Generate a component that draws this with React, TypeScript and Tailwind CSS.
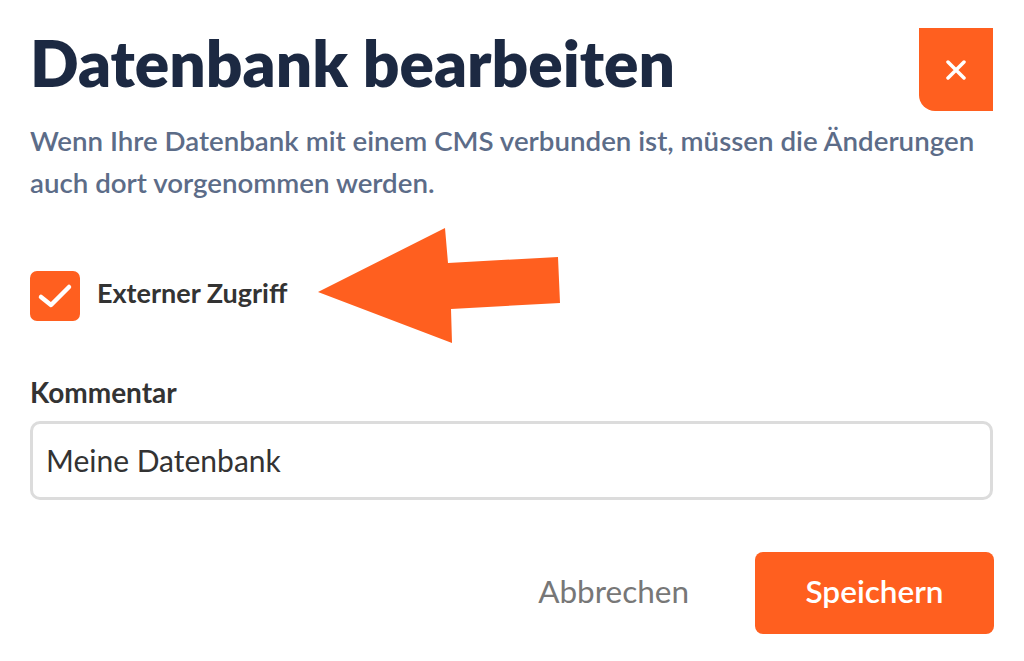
import React from 'react';

const ORANGE = '#ff5f1f';

function CloseIcon() {
  return (
    <svg width="20" height="20" viewBox="0 0 20 20" fill="none">
      <path d="M2 2L18 18M18 2L2 18" stroke="white" strokeWidth="3.5" strokeLinecap="round" />
    </svg>
  );
}

function CheckIcon() {
  return (
    <svg width="50" height="50" viewBox="0 0 50 50" fill="none">
      <path d="M11 26L21 34L39 16" stroke="white" strokeWidth="4.5" strokeLinecap="round" strokeLinejoin="round" />
    </svg>
  );
}

export default function App() {
  return (
    <div className="relative w-[1024px] h-[661px] overflow-hidden bg-white font-['Lato',sans-serif]">
      <div className="pl-[30px] pr-[31px] pt-[28px]">
        {/* header */}
        <div className="flex items-start justify-between">
          <h1 className="mt-[2px] text-[64px] leading-[65px] font-extrabold text-[#1c2942]">
            Datenbank bearbeiten
          </h1>
          <button className="w-[74px] h-[83px] bg-[#ff5f1f] rounded-bl-[16px] flex items-center justify-center">
            <CloseIcon />
          </button>
        </div>

        <p className="mt-[9px] text-[27.7px] leading-[42px] font-semibold text-[#5c6c88] whitespace-nowrap">
          Wenn Ihre Datenbank mit einem CMS verbunden ist, müssen die Änderungen
          <br />
          auch dort vorgenommen werden.
        </p>

        {/* checkbox */}
        <label className="mt-[67px] flex items-start">
          <span className="w-[50px] h-[50px] rounded-[7px] bg-[#ff5f1f] flex items-center justify-center">
            <CheckIcon />
          </span>
          <span className="ml-[17px] mt-[7px] text-[27px] leading-[30px] font-bold text-[#333333]">
            Externer Zugriff
          </span>
        </label>

        {/* comment */}
        <div className="mt-[56px] text-[28px] leading-[30px] font-bold text-[#333333]">Kommentar</div>
        <div className="mt-[14px] h-[79px] border-[3px] border-[#dcdcdc] rounded-[10px] flex items-center pl-[13px]">
          <span className="text-[30px] text-[#333333]">Meine Datenbank</span>
        </div>

        {/* actions */}
        <div className="mt-[52px] flex items-center justify-end">
          <button className="mr-[66px] pb-[3px] text-[31.5px] text-[#777777]">Abbrechen</button>
          <button className="w-[239px] h-[82px] pb-[3px] rounded-[8px] bg-[#ff5f1f] text-white text-[31.5px] font-semibold -mr-[1px]">
            Speichern
          </button>
        </div>
      </div>

      {/* annotation arrow */}
      <svg className="absolute inset-0 pointer-events-none" width="1024" height="661" viewBox="0 0 1024 661">
        <polygon points="318,292 445,228 448,263 558,257 560,303 451,309 452,343" fill={ORANGE} />
      </svg>
    </div>
  );
}
